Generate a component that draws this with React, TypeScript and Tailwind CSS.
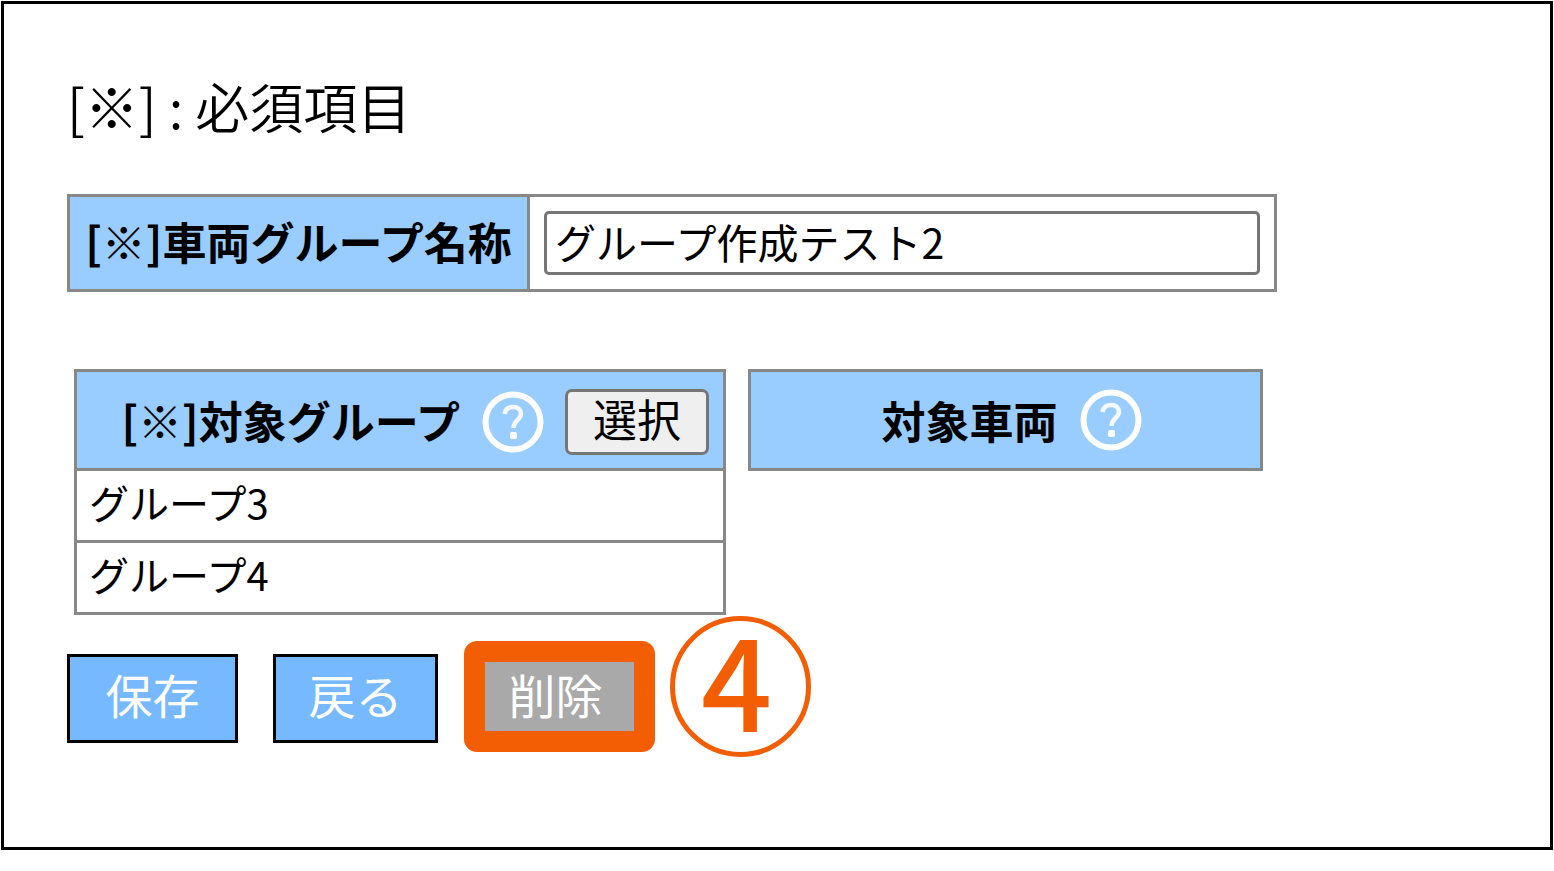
import { useState } from "react";

const groups = ["グループ3", "グループ4"];

function HelpIcon() {
  return (
    <svg
      className="size-[62px] shrink-0"
      viewBox="0 0 62 62"
      fill="none"
      stroke="white"
      aria-hidden="true"
    >
      <circle cx="31" cy="31" r="27.5" strokeWidth="6" />
      <path
        d="M22.5 23C23.3 18.3 26.5 16 31 16C36 16 39 18.8 39 22.8C39 28.7 31.5 29.5 31.5 37"
        strokeWidth="4.5"
        opacity="0.9"
      />
      <rect x="28" y="41" width="7" height="7" rx="2" fill="white" stroke="none" />
    </svg>
  );
}

export default function App() {
  const [name, setName] = useState("グループ作成テスト2");

  return (
    <main
      lang="ja"
      className="m-px border-[3px] border-black bg-white px-[63px] pt-[72px] pb-[104px] font-['Noto_Sans_CJK_JP',sans-serif] text-black"
    >
      <p className="text-[54px] leading-[60px] font-[350]">[※] : 必須項目</p>

      <table className="mt-[58px] w-full max-w-[1210px] border-collapse">
        <tbody>
          <tr>
            <th className="w-[460px] border-[3px] border-[#888] bg-[#99ccff] p-0 pb-1 text-center text-[44px] leading-[64px] font-bold whitespace-nowrap">
              <label htmlFor="group-name">[※]車両グループ名称</label>
            </th>
            <td className="border-[3px] border-[#888] px-[14px] py-[14px]">
              <input
                id="group-name"
                type="text"
                value={name}
                onChange={(e) => setName(e.target.value)}
                className="block h-16 w-full rounded-[5px] border-[3px] border-[#767676] bg-white px-2 pb-1 text-[41px] font-normal outline-none"
              />
            </td>
          </tr>
        </tbody>
      </table>

      <div className="mt-[77px] ml-[7px] flex items-start gap-[22px]">
        <table className="w-[652px] border-collapse">
          <thead>
            <tr>
              <th className="h-[99px] border-[3px] border-[#888] bg-[#99ccff] p-0 pt-1 pr-[14px] text-[44px] leading-[64px] font-bold whitespace-nowrap">
                <div className="flex items-center justify-end">
                  <span className="pb-1">[※]対象グループ</span>
                  <span className="mr-[21px] ml-[22px]">
                    <HelpIcon />
                  </span>
                  <button
                    type="button"
                    className="h-[66px] w-[144px] rounded-[7px] border-[3px] border-[#767676] bg-[#efefef] pb-2 leading-[52px] font-normal"
                  >
                    選択
                  </button>
                </div>
              </th>
            </tr>
          </thead>
          <tbody>
            {groups.map((group) => (
              <tr key={group}>
                <td className="h-[72px] border-[3px] border-[#888] p-0 pb-2 pl-3 text-[40px] leading-[60px] font-normal">
                  {group}
                </td>
              </tr>
            ))}
          </tbody>
        </table>

        <table className="w-[515px] border-collapse">
          <thead>
            <tr>
              <th className="h-[99px] border-[3px] border-[#888] bg-[#99ccff] p-0 pl-3 text-[44px] leading-[64px] font-bold whitespace-nowrap">
                <div className="flex items-center justify-center gap-[22px]">
                  <span>対象車両</span>
                  <HelpIcon />
                </div>
              </th>
            </tr>
          </thead>
        </table>
      </div>

      <div className="mt-[39px] flex gap-[35px] text-[47px] font-normal text-white">
        <button
          type="button"
          className="h-[89px] w-[171px] border-[3px] border-black bg-[#77b9ff] pb-2"
        >
          保存
        </button>
        <button
          type="button"
          className="h-[89px] w-[165px] border-[3px] border-black bg-[#77b9ff] pb-2"
        >
          戻る
        </button>
        <div className="relative">
          <button type="button" className="h-[89px] w-[165px] bg-[#a9a9a9] pb-2">
            削除
          </button>
          <span className="pointer-events-none absolute -top-[13px] -right-[17px] -bottom-[9px] -left-[9px] rounded-[13px] border-[21px] border-[#f35e05]" />
          <span className="absolute -top-[38px] left-full ml-8 flex size-[141px] items-center justify-center rounded-full border-[5px] border-[#f35e05] pr-2 pb-[18px] text-[125px] leading-none font-medium text-[#f35e05]">
            4
          </span>
        </div>
      </div>
    </main>
  );
}
